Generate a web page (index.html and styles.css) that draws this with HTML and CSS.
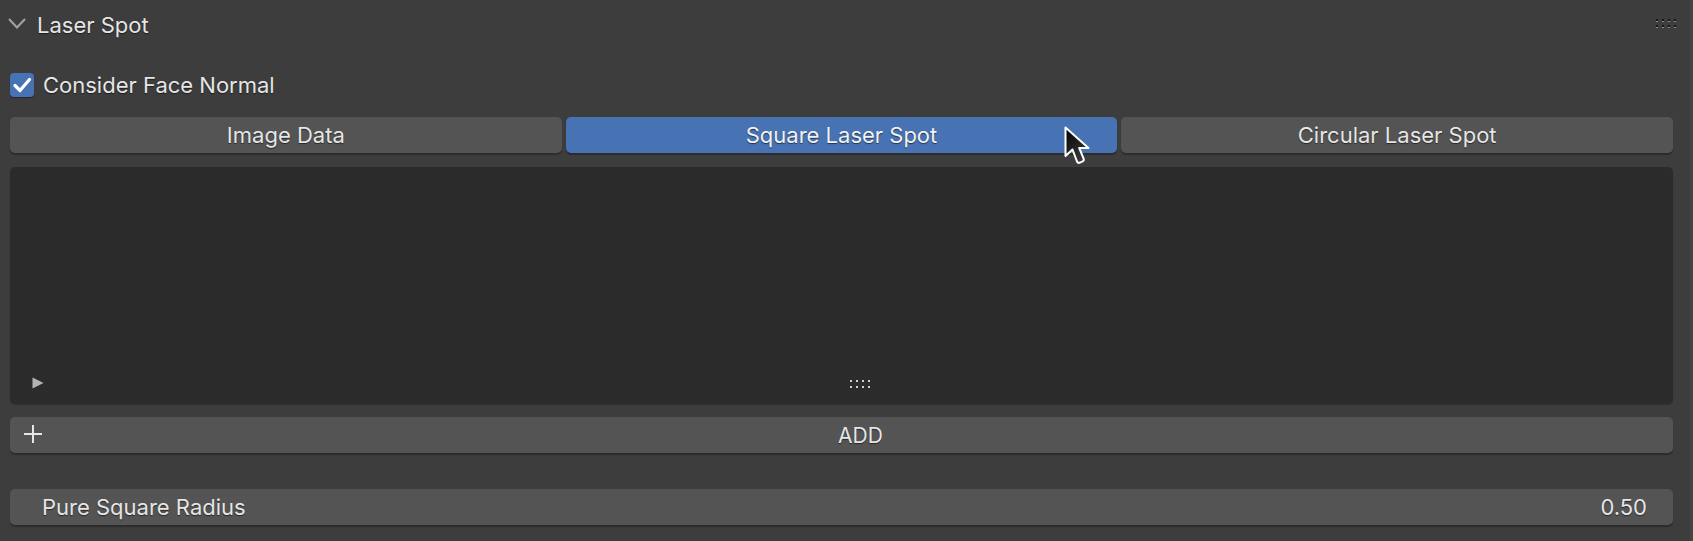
FILE: index.html
```html
<!DOCTYPE html>
<html>
<head>
<meta charset="utf-8">
<link rel="stylesheet" href="styles.css">
</head>
<body>
<div class="region">
  <div class="panel">
    <div class="header">
      <svg class="chevron" width="18" height="11" viewBox="0 0 18 11"><path d="M1 1 L9 9.5 L17 1" fill="none" stroke="#a3a3a3" stroke-width="2"/></svg>
      <span class="title">Laser Spot</span>
      <svg class="hgrip" width="21" height="10" viewBox="0 0 21 10">
        <g fill="#161616">
          <rect x="0" y="0" width="2" height="2"/><rect x="6" y="0" width="2" height="2"/><rect x="12" y="0" width="2" height="2"/><rect x="18" y="0" width="2" height="2"/>
          <rect x="0" y="6" width="2" height="2"/><rect x="6" y="6" width="2" height="2"/><rect x="12" y="6" width="2" height="2"/><rect x="18" y="6" width="2" height="2"/>
        </g>
        <g fill="#909090">
          <rect x="0" y="2" width="2" height="1"/><rect x="6" y="2" width="2" height="1"/><rect x="12" y="2" width="2" height="1"/><rect x="18" y="2" width="2" height="1"/>
          <rect x="0" y="8" width="2" height="1"/><rect x="6" y="8" width="2" height="1"/><rect x="12" y="8" width="2" height="1"/><rect x="18" y="8" width="2" height="1"/>
        </g>
      </svg>
    </div>
    <div class="check-row">
      <span class="checkbox"><svg width="24" height="24" viewBox="0 0 24 24"><path d="M5 12.5 L10 17.5 L19.5 6.5" fill="none" stroke="#fff" stroke-width="3.2" stroke-linecap="round" stroke-linejoin="round"/></svg></span>
      <span class="check-label">Consider Face Normal</span>
    </div>
    <div class="tabs">
      <div class="btn">Image Data</div>
      <div class="btn active">Square Laser Spot</div>
      <div class="btn">Circular Laser Spot</div>
    </div>
    <div class="list">
      <svg class="play" width="12" height="12" viewBox="0 0 12 12"><path d="M0.5 0.5 L11.5 6 L0.5 11.5 Z" fill="#b3b3b3"/></svg>
      <svg class="lgrip" width="22" height="9" viewBox="0 0 22 9">
        <g fill="#cfcfcf">
          <rect x="0" y="0" width="2" height="2"/><rect x="6" y="0" width="2" height="2"/><rect x="12" y="0" width="2" height="2"/><rect x="18" y="0" width="2" height="2"/>
          <rect x="0" y="6" width="2" height="2"/><rect x="6" y="6" width="2" height="2"/><rect x="12" y="6" width="2" height="2"/><rect x="18" y="6" width="2" height="2"/>
        </g>
      </svg>
    </div>
    <div class="btn add">
      <svg class="plus" width="18" height="18" viewBox="0 0 18 18"><path d="M9 0 V18 M0 9 H18" stroke="#e6e6e6" stroke-width="2"/></svg>
      <span>ADD</span>
    </div>
    <div class="field">
      <span>Pure Square Radius</span>
      <span>0.50</span>
    </div>
  </div>
  <div class="edge"></div>
</div>
<svg class="cursor" width="26" height="40" viewBox="0 0 26 40">
  <defs>
    <linearGradient id="cg" x1="0" y1="0" x2="0.6" y2="1">
      <stop offset="0" stop-color="#000"/>
      <stop offset="1" stop-color="#3a3a3a"/>
    </linearGradient>
  </defs>
  <path d="M1.5 1.5 L1.5 30 L8.5 23.5 L13 35.5 Q14 37.5 16 36.6 L18.6 35.4 Q20.3 34.4 19.6 32.6 L15.2 22 L24.5 22 Z" fill="url(#cg)" stroke="#fff" stroke-width="2" stroke-linejoin="round"/>
</svg>
</body>
</html>
```
FILE: styles.css
```css
html, body {
  margin: 0;
  padding: 0;
  background: #3d3d3d;
  width: 1693px;
  height: 541px;
  overflow: hidden;
}
body {
  font-family: Inter, "Noto Sans", sans-serif;
  font-size: 22px;
  color: #e6e6e6;
  position: relative;
}
.region {
  display: flex;
  height: 541px;
}
.panel {
  flex: 1;
  display: flex;
  flex-direction: column;
  padding: 0 17px 0 10px;
}
.edge {
  width: 3px;
  background: #444444;
}
.header {
  height: 50px;
  display: flex;
  align-items: center;
  margin-left: -2px;
  position: relative;
}
.chevron {
  margin-top: -3px;
}
.title {
  margin-left: 11px;
  text-shadow: 0 1px 1px rgba(0,0,0,0.55);
}
.hgrip {
  margin-left: auto;
  margin-right: -4px;
  margin-top: -2px;
}
.check-row {
  margin-top: 22px;
  height: 25px;
  display: flex;
  align-items: center;
}
.checkbox {
  width: 24px;
  height: 24px;
  border-radius: 4px;
  background: #4772b3;
  box-shadow: 0 1px 1px rgba(0,0,0,0.35);
  display: flex;
}
.check-label {
  margin-left: 9px;
  text-shadow: 0 1px 1px rgba(0,0,0,0.55);
}
.tabs {
  margin-top: 20px;
  display: grid;
  grid-template-columns: 1fr 1fr 1fr;
  gap: 4px;
}
.btn {
  height: 36px;
  border-radius: 5px;
  background: #545454;
  box-shadow: 0 2px 1px rgba(0,0,0,0.28);
  display: flex;
  align-items: center;
  justify-content: center;
  text-shadow: 0 1px 1px rgba(0,0,0,0.55);
}
.btn.active {
  background: #4772b3;
  color: #f2f2f2;
}
.list {
  margin-top: 14px;
  height: 236px;
  border-radius: 5px;
  background: #2b2b2b;
  box-shadow: 0 2px 1px rgba(0,0,0,0.25);
  position: relative;
  display: flex;
  align-items: flex-end;
  justify-content: center;
  padding-left: 38px;
}
.play {
  position: absolute;
  left: 22px;
  bottom: 14px;
}
.lgrip {
  margin-bottom: 14px;
}
.add {
  margin-top: 14px;
  position: relative;
  font-size: 21px;
  padding-left: 38px;
}
.plus {
  position: absolute;
  left: 14px;
  top: 8px;
}
.field {
  margin-top: 36px;
  height: 36px;
  border-radius: 5px;
  background: #545454;
  box-shadow: 0 2px 1px rgba(0,0,0,0.28);
  display: flex;
  align-items: center;
  justify-content: space-between;
  padding: 0 26px 0 32px;
  text-shadow: 0 1px 1px rgba(0,0,0,0.55);
}
.cursor {
  position: absolute;
  left: 1064px;
  top: 126px;
}
```
